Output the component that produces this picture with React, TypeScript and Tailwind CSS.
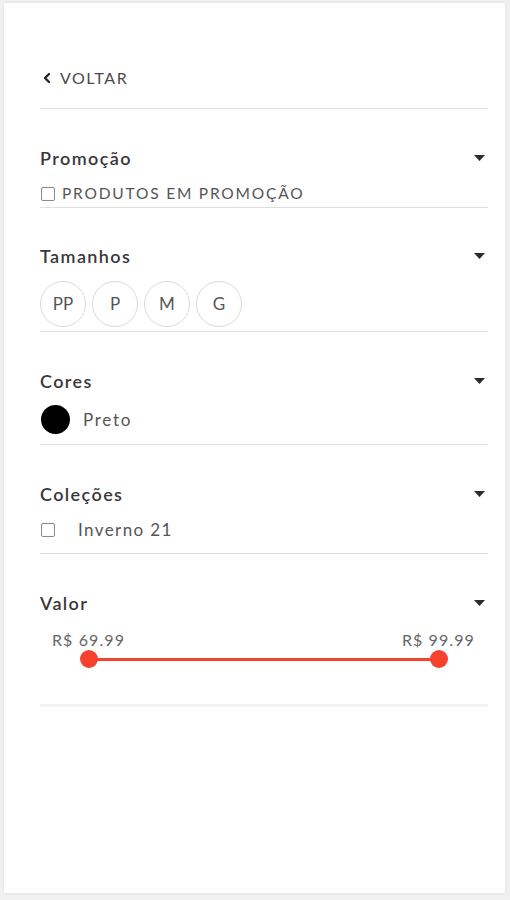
import { ChevronLeft } from "lucide-react";

const sizes = ["PP", "P", "M", "G"];

function Caret() {
  return (
    <svg width="11" height="6" viewBox="0 0 11 6" className="block">
      <path d="M0 0 H11 L5.5 6 Z" fill="#2b2b2b" />
    </svg>
  );
}

function SectionHeader({ title }: { title: string }) {
  return (
    <div className="flex h-6 items-center justify-between">
      <span className="text-[18px] font-semibold tracking-[1.4px] text-[#3b363a]">{title}</span>
      <span className="pr-[3px]">
        <Caret />
      </span>
    </div>
  );
}

function Checkbox() {
  return <span className="block h-[14px] w-[14px] rounded-[2px] border border-[#8a8a8a] bg-white" />;
}

export default function App() {
  return (
    <div className="min-h-screen bg-[#f0f0f0] pb-[7px] pl-[4px] pr-[5px] pt-[3px] font-['Lato','Liberation_Sans',sans-serif]">
      <div className="h-[890px] bg-white pl-[36px] pr-[17px] pt-[63px] shadow-[0_0_3px_rgba(0,0,0,0.08)]">
        <div className="flex h-6 items-center text-[16px] tracking-[1.5px] text-[#4a4a4a]">
          <ChevronLeft size={16} strokeWidth={3.5} className="ml-[-1px] text-[#222]" />
          <span className="ml-[5px]">VOLTAR</span>
        </div>
        <div className="mt-[18px] border-b border-[#dedede]" />

        <section className="border-b border-[#dedede] pb-[3px] pt-[37px]">
          <SectionHeader title="Promoção" />
          <div className="mt-[14px] flex h-5 items-center gap-[7px] text-[15.5px] tracking-[1.8px] text-[#555]">
            <span className="ml-[1px]">
              <Checkbox />
            </span>
            <span>PRODUTOS EM PROMOÇÃO</span>
          </div>
        </section>

        <section className="border-b border-[#dedede] pb-[4px] pt-[36px]">
          <SectionHeader title="Tamanhos" />
          <div className="mt-[13px] flex gap-[6px]">
            {sizes.map((s) => (
              <div
                key={s}
                className="flex h-[46px] w-[46px] items-center justify-center rounded-full border border-[#d9d9d9] text-[17px] text-[#555]"
              >
                {s}
              </div>
            ))}
          </div>
        </section>

        <section className="border-b border-[#dedede] pb-[10px] pt-[37px]">
          <SectionHeader title="Cores" />
          <div className="mt-[12px] flex items-center gap-[13px]">
            <span className="ml-[1px] block h-[29px] w-[29px] rounded-full bg-black" />
            <span className="text-[17px] tracking-[1.7px] text-[#555]">Preto</span>
          </div>
        </section>

        <section className="border-b border-[#dedede] pb-[13px] pt-[37px]">
          <SectionHeader title="Coleções" />
          <div className="mt-[14px] flex h-5 items-center gap-[23px]">
            <span className="ml-[1px]">
              <Checkbox />
            </span>
            <span className="text-[17px] tracking-[1.4px] text-[#555]">Inverno 21</span>
          </div>
        </section>

        <section className="border-b-[3px] border-[#f3f3f3] pb-[43px] pt-[37px]">
          <SectionHeader title="Valor" />
          <div className="mt-[15px] flex h-5 items-center justify-between pl-[12px] pr-[13px] text-[16px] tracking-[1.1px] text-[#666]">
            <span>R$ 69.99</span>
            <span>R$ 99.99</span>
          </div>
          <div className="relative mx-[49px] mt-[8px] h-[3px] bg-[#f5412d]">
            <span className="absolute left-[-9px] top-[-8px] h-[18px] w-[18px] rounded-full bg-[#f5412d]" />
            <span className="absolute right-[-9px] top-[-8px] h-[18px] w-[18px] rounded-full bg-[#f5412d]" />
          </div>
        </section>
      </div>
    </div>
  );
}
